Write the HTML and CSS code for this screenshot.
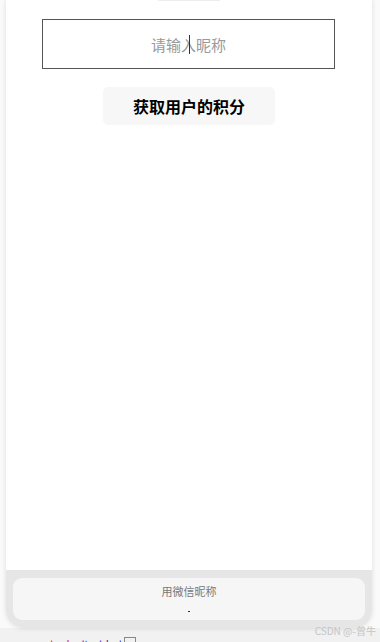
FILE: index.html
```html
<!DOCTYPE html>
<html lang="zh-CN">
<head>
<meta charset="UTF-8">
<meta name="viewport" content="width=device-width, initial-scale=1.0">
<title>获取用户的积分</title>
<link rel="stylesheet" href="styles.css">
</head>
<body>

<div class="phone">
    <div class="top-bar"></div>

    <div class="field">
        <span class="placeholder">请输入昵称</span>
        <span class="caret"></span>
    </div>

    <div class="btn-row">
        <button class="get-btn">获取用户的积分</button>
    </div>

    <div class="spacer"></div>

    <div class="sheet">
        <div class="sheet-card">
            <div class="sheet-title">用微信昵称</div>
            <div class="sheet-dot"></div>
        </div>
    </div>
</div>

<div class="footer">
    <span class="code"><span class="red">readonly</span> <span class="blue">disabled</span> <span class="box"></span></span>
    <span class="mark">CSDN @-曾牛</span>
</div>

</body>
</html>
```

FILE: styles.css
```css
body {
    margin: 0;
    padding: 0;
    background: #fafafa;
    font-family: "Noto Sans CJK SC", "Noto Sans", sans-serif;
    width: 380px;
    height: 642px;
    overflow: hidden;
}

.phone {
    margin: 0 8px 0 6px;
    height: 628px;
    background: #fff;
    border-radius: 0 0 18px 18px;
    box-shadow: 0 0 5px rgba(0, 0, 0, 0.12);
    display: flex;
    flex-direction: column;
    overflow: hidden;
    position: relative;
    z-index: 1;
}

.top-bar {
    width: 62px;
    height: 1px;
    margin: 0 auto;
    background: #eee;
}

.field {
    position: relative;
    margin: 18px 0 0 36px;
    width: 291px;
    height: 48px;
    border: 1px solid #555;
    display: flex;
    align-items: center;
    justify-content: center;
}

.placeholder {
    font-size: 15px;
    color: #999;
}

.caret {
    position: absolute;
    left: 146px;
    top: 15px;
    width: 1px;
    height: 19px;
    background: #333;
}

.btn-row {
    margin-top: 18px;
    display: flex;
    justify-content: center;
}

.get-btn {
    width: 172px;
    height: 38px;
    border: none;
    border-radius: 5px;
    background: #f7f7f7;
    font-family: "Noto Sans CJK SC", sans-serif;
    font-size: 16px;
    font-weight: bold;
    color: #000;
    padding: 0;
}

.spacer {
    flex: 1;
}

.sheet {
    height: 58px;
    background: #e6e6e6;
    padding: 8px 7px 0 7px;
    box-sizing: border-box;
}

.sheet-card {
    height: 42px;
    background: #f6f6f6;
    border-radius: 9px;
    display: flex;
    flex-direction: column;
    align-items: center;
}

.sheet-title {
    margin-top: 5px;
    font-size: 11px;
    line-height: 16px;
    color: #777;
}

.sheet-dot {
    margin-top: 12px;
    width: 2px;
    height: 1px;
    background: #333;
}

.footer {
    position: relative;
    height: 14px;
    background: #f1f1f1;
}

.code {
    position: absolute;
    left: 30px;
    top: 9px;
    font-size: 11px;
    line-height: 14px;
    color: #555;
}

.red {
    color: #c33;
}

.blue {
    color: #33a;
}

.box {
    display: inline-block;
    width: 10px;
    height: 10px;
    border: 1px solid #888;
}

.mark {
    position: absolute;
    right: 4px;
    top: -4px;
    z-index: 2;
    font-size: 10px;
    line-height: 14px;
    color: #c4c4c4;
}
```
